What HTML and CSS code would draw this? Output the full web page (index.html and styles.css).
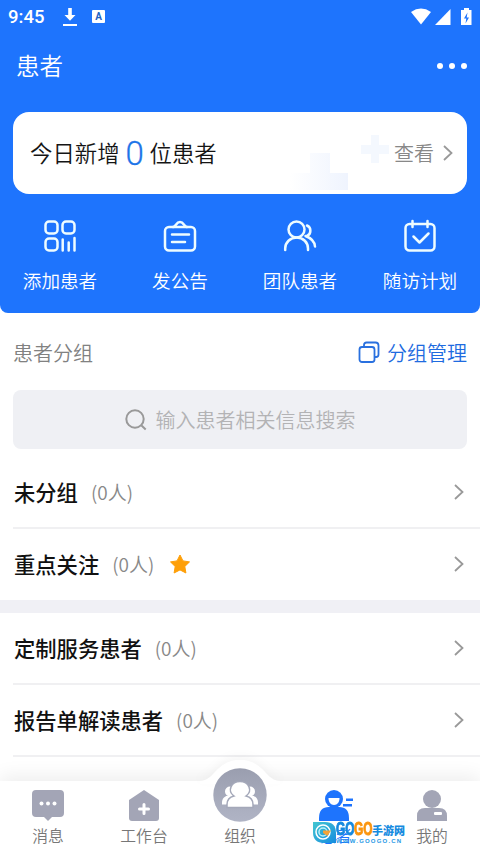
FILE: index.html
```html
<!DOCTYPE html>
<html lang="zh-CN">
<head>
<meta charset="utf-8">
<meta name="viewport" content="width=device-width, initial-scale=1">
<title>患者</title>
<link rel="stylesheet" href="styles.css">
</head>
<body>
<div class="app">
  <header class="hero">
    <div class="status">
      <span class="time">9:45</span>
      <svg class="download" width="14" height="19" viewBox="0 0 14 19"><path d="M5.200 0h3.600v7h3.700L7 12.800 1.500 7h3.700zM0 16h14v2H0z" fill="#fff"/></svg>
      <span class="badge">A</span>
      <svg class="signals" width="62" height="20" viewBox="0 0 62 20"><path d="M1 5Q11-1.800 21 5L11 17.500z" fill="#fff"/><path d="M40.500 2v16H25z" fill="#fff"/><path d="M51 3h3V1h5v2h2.500v15H51z" fill="#fff"/><path d="M57.500 5.500l-3.500 6h2.300l-.8 5 3.500-6h-2.300z" fill="#1e74fd"/></svg>
    </div>
    <div class="titlebar"><h1>患者</h1><span class="more"><i></i><i></i><i></i></span></div>
    <section class="summary">
      <span class="today">今日新增</span><b class="number">0</b><span class="today">位患者</span>
      <svg class="crosses" width="102" height="60" viewBox="0 0 102 60"><defs><linearGradient id="c" x1="0" x2="1"><stop stop-color="#fff"/><stop offset="1" stop-color="#eff4fe"/></linearGradient></defs><path d="M23 20h20v20h18v17H3V40h20z" fill="url(#c)"/><path d="M84 2h8v10h10v9H92v9h-8v-9H74v-9h10z" fill="#f4f8fe"/></svg>
      <span class="look">查看</span><svg class="arrow" width="10" height="16" viewBox="0 0 10 16"><path d="M1 1l7.500 7L1 15"/></svg>
    </section>
    <nav class="actions">
      <div class="action"><svg width="34" height="34" viewBox="0 0 34 34"><g><rect x="2.500" y="2.500" width="12" height="12" rx="3.500"/><rect x="19.500" y="2.500" width="12" height="12" rx="3.500"/><rect x="2.500" y="19.500" width="12" height="12" rx="3.500"/><path d="M19.700 20.500v11M25.700 23.500v8M31.500 19v12.500"/></g></svg><span>添加患者</span></div>
      <div class="action"><svg width="34" height="34" viewBox="0 0 34 34"><g><rect x="2" y="8" width="30" height="23.500" rx="4"/><path d="M10 8c3 0 3-5 7-5s4 5 7 5M9 15.500h17M9 23h13"/></g></svg><span>发公告</span></div>
      <div class="action"><svg width="34" height="34" viewBox="0 0 34 34"><g><circle cx="13.500" cy="10.500" r="8"/><path d="M2.200 31v-1.500c0-6 5-11 11.500-11S25 23.500 25 29.500V31M24 6.500c4.500 2 4.500 8.500 0 10.500h-1.500c5.500 2 9 5 9.500 10.500"/></g></svg><span>团队患者</span></div>
      <div class="action"><svg width="34" height="34" viewBox="0 0 34 34"><g><rect x="2.500" y="5" width="29" height="26.500" rx="4"/><path d="M9.500 2v6M24.500 2v6M10.500 17.500l6 6 9-9"/></g></svg><span>随访计划</span></div>
    </nav>
  </header>
  <main>
    <div class="section-head"><span>患者分组</span><span class="manage"><svg width="22" height="22" viewBox="0 0 22 22"><rect x="1.500" y="6" width="15" height="15" rx="2.500"/><path d="M6 6V4q0-2.500 2.500-2.500h9Q20.500 1.500 20.500 4.500v9q0 2.500-2.500 2.500h-1.500"/></svg>分组管理</span></div>
    <div class="search"><svg width="22" height="22" viewBox="0 0 22 22"><circle cx="10" cy="10" r="8.700"/><path d="M16.500 16.500l4.200 4"/></svg><span>输入患者相关信息搜索</span></div>
    <section class="groups">
      <div class="row first"><strong>未分组</strong><span class="count">(0人)</span><svg class="arrow" width="10" height="16" viewBox="0 0 10 16"><path d="M1 1l7.500 7L1 15"/></svg></div>
      <div class="row"><strong>重点关注</strong><span class="count">(0人)</span><svg class="star" width="22" height="21" viewBox="0 0 22 21"><path d="M11 1l3 5.900 6.500 1-4.700 4.600 1.100 6.500-5.900-3.100L5.100 19l1.100-6.500L1.500 7.900l6.500-1z"/></svg><svg class="arrow" width="10" height="16" viewBox="0 0 10 16"><path d="M1 1l7.500 7L1 15"/></svg></div>
    </section>
    <section class="services">
      <div class="row"><strong>定制服务患者</strong><span class="count">(0人)</span><svg class="arrow" width="10" height="16" viewBox="0 0 10 16"><path d="M1 1l7.500 7L1 15"/></svg></div>
      <div class="row"><strong>报告单解读患者</strong><span class="count">(0人)</span><svg class="arrow" width="10" height="16" viewBox="0 0 10 16"><path d="M1 1l7.500 7L1 15"/></svg></div>
    </section>
  </main>
  <footer class="tabs">
    <svg class="hump" width="80" height="24" viewBox="0 0 80 24"><path d="M0 21c10-1 12-7 19-13C31-3 49-3 61 8c7 6 9 12 19 13v3H0z" fill="#fff"/></svg>
    <div class="tab"><svg width="32" height="32" viewBox="0 0 32 32"><path d="M4 0h24q4 0 4 4v19q0 4-4 4h-8l-4 4-4-4H4q-4 0-4-4V4q0-4 4-4z" fill="#a3a5b6"/><g fill="#fff"><circle cx="9.500" cy="13.500" r="2"/><circle cx="16" cy="13.500" r="2"/><circle cx="22.500" cy="13.500" r="2"/></g></svg><span>消息</span></div>
    <div class="tab"><svg width="32" height="32" viewBox="0 0 32 32"><path d="M16 0l15 10v18q0 3-3 3H4q-3 0-3-3V10z" fill="#a3a5b6"/><path d="M16 14.500v9M11.500 19h9" stroke="#fff" stroke-width="3" stroke-linecap="round"/></svg><span>工作台</span></div>
    <div class="tab center"><svg width="54" height="54" viewBox="0 0 54 54"><defs><linearGradient id="g" x2="0" y2="1"><stop stop-color="#9a9eaf"/><stop offset="1" stop-color="#b0b4c5"/></linearGradient></defs><circle cx="27" cy="27" r="26.700" fill="url(#g)"/><g fill="#fff"><circle cx="17" cy="23.500" r="5"/><circle cx="37" cy="23.500" r="5"/><path d="M9 36.500v-2c0-4 3-7 7-7h22c4 0 7 3 7 7v2z"/></g><path d="M14 39.500v-3c0-4.500 3-7.500 7-8.500-7-5-3-14.500 6-14.500S40 23 33 28c4 1 7 4 7 8.500v3z" fill="#fff" stroke="#a4a8b9" stroke-width="1.500"/></svg><span>组织</span></div>
    <div class="tab active"><svg width="34" height="32" viewBox="0 0 34 32"><g fill="#1e74fd"><circle cx="15" cy="9" r="9"/><path d="M0 31v-3q0-11 10-11h10q10 0 10 11v3zM24 14h9v2.500h-9zM27 8.500h7V11h-7z"/></g><path d="M9.500 8h11c0 4-2 7-5.500 7s-5.500-3-5.500-7z" fill="#fff"/></svg><span>患者</span></div>
    <div class="tab"><svg width="32" height="32" viewBox="0 0 32 32"><g fill="#a3a5b6"><circle cx="16" cy="9" r="9"/><path d="M1 31v-5q0-8 8-8h14q8 0 8 8v5z"/></g><rect x="18" y="22" width="8" height="3" rx="1" fill="#fff"/></svg><span>我的</span></div>
  </footer>
  <div class="watermark">
    <svg width="25" height="24" viewBox="0 0 25 24"><defs><linearGradient id="w" x2="1" y2="1"><stop stop-color="#43c6d0"/><stop offset="1" stop-color="#168cdf"/></linearGradient></defs><path d="M1 1h12q11 0 11 11v10H12Q1 22 1 11z" fill="url(#w)"/><circle cx="11" cy="11" r="7" fill="none" stroke="#fff" stroke-width="1.500"/><circle cx="11" cy="11" r="4" fill="none" stroke="#b7f0fa" stroke-width="1.500"/><path d="M11 9.500h8l-3.500 5.500L11 12z" fill="#f4a337"/></svg>
    <div class="brand"><div class="brand-name"><b class="go">GO</b><b class="go orange">GO</b><b class="cn">手游网</b></div><div class="domain">WWW.GOOGO.CN</div></div>
  </div>
</div>
</body>
</html>
```
FILE: styles.css
```css
* { box-sizing: border-box; }
body { margin: 0; background: #fff; color: #111; font-family: "Noto Sans CJK SC", sans-serif; }
.app { position: relative; display: flex; flex-direction: column; width: 480px; height: 853px; overflow: hidden; font-weight: 350; }
svg { display: block; flex: none; }
.hero { height: 313px; background: #1e74fd; border-radius: 0 0 8px 8px; color: #fff; flex: none; }
.status { display: flex; align-items: center; height: 32px; padding: 1px 8px 0; }
.time { width: 55px; font: 500 18.500px Roboto, sans-serif; }
.download { margin-top: 1px; }
.badge { width: 13px; height: 13px; margin-left: 15px; border-radius: 1px; background: #fff; color: #1e62c4; font: bold 10px/13px Roboto, sans-serif; text-align: center; }
.signals { margin-left: auto; }
.titlebar { display: flex; align-items: center; justify-content: space-between; height: 80px; padding: 0 13px 12px 16px; }
h1 { margin: -2px 0 0; font-size: 23.500px; line-height: 34px; font-weight: 350; }
.more { display: flex; gap: 6px; }
.more i { width: 6px; height: 6px; border-radius: 50%; background: #fff; }
.summary { display: flex; align-items: center; height: 82px; margin: 0 13px; padding: 0 14px 0 17px; border-radius: 16px; background: #fff; }
.today { color: #151515; font-size: 22.400px; line-height: 32px; margin-top: -2px; }
.number { width: 30px; text-align: center; color: #1e74e8; font: 300 33px/40px Roboto, sans-serif; -webkit-text-stroke: .3px #1e74e8; margin-top: 1px; }
.crosses { margin-left: 70px; margin-top: 20px; }
.look { margin-left: auto; margin-right: 9px; margin-top: -1px; color: #888; font-size: 20px; }
.arrow { margin-left: auto; margin-top: -1px; fill: none; stroke: #999; stroke-width: 1.800; }
.look + .arrow { margin-left: 0; }
.actions { display: grid; grid-template-columns: repeat(4, 1fr); padding-top: 25px; }
.action { display: flex; flex-direction: column; align-items: center; gap: 14px; font-size: 18.600px; line-height: 26px; }
.action g { fill: none; stroke: #eefcff; stroke-width: 2.500; stroke-linecap: round; stroke-linejoin: round; }
.section-head { display: flex; align-items: center; justify-content: space-between; height: 77px; padding: 1px 13px 0 13px; color: #818181; font-size: 20px; }
.manage { display: flex; align-items: center; gap: 7px; color: #1e6be0; }
.manage svg { fill: none; stroke: #2970df; stroke-width: 1.800; }
.search { display: flex; align-items: center; justify-content: center; gap: 9px; height: 59px; margin: 0 13px; border-radius: 8px; background: #eff0f4; color: #b3b3b5; font-size: 20px; }
.search svg { fill: none; stroke: #999; stroke-width: 2; }
.row { display: flex; align-items: center; height: 72px; margin-left: 13px; padding-right: 16px; }
.row strong { margin: -2px 0 0 1px; font-size: 21.300px; font-weight: 500; }
.count { margin: -2px 0 0 13px; color: #888; font-size: 19px; }
.star { margin-left: 15px; fill: #fe9f08; stroke: #fe9f08; stroke-linejoin: round; }
.first { height: 80px; padding-top: 9px; border-bottom: 2px solid #f0f0f2; }
.groups { border-bottom: 13px solid #f0f0f5; height: 164px; }
.groups .row + .row { height: 71px; }
.services .row { height: 72px; padding-top: 1px; border-bottom: 2px solid #f0f0f2; }
.tabs { position: absolute; left: 0; right: 0; bottom: 0; display: grid; grid-template-columns: repeat(5, 1fr); height: 72px; padding-top: 9px; background: #fff; box-shadow: 0 -5px 18px rgba(0,0,0,.07); }
.hump { position: absolute; left: 200px; top: -21px; filter: drop-shadow(0 -4px 4px rgba(0,0,0,.035)); }
.tab { position: relative; display: flex; flex-direction: column; align-items: center; color: #777; font-size: 15.800px; line-height: 24px; }
.tab > span { margin-top: 2px; }
.center { margin-top: -22px; }
.center > span { margin-top: 2px; }
.active { color: #1e74fd; }
.watermark { position: absolute; left: 312px; top: 821px; display: flex; }
.brand { width: 71px; margin-left: -1px; }
.brand-name { display: flex; align-items: center; height: 17px; white-space: nowrap; text-shadow: 0 0 1px #fff, 0 0 1px #fff; }
.go { font: bold 18px/17px "Liberation Sans", sans-serif; transform: scaleX(.66); transform-origin: 0 50%; width: 18px; color: #1689df; -webkit-text-stroke: 1px #1689df; }
.orange { color: #fb950e; -webkit-text-stroke-color: #fb950e; }
.cn { font-size: 11px; line-height: 16px; color: #168be0; font-weight: 900; }
.domain { color: #2698e6; font: bold 6px/6px "Liberation Sans", sans-serif; letter-spacing: 1.200px; white-space: nowrap; }
```
